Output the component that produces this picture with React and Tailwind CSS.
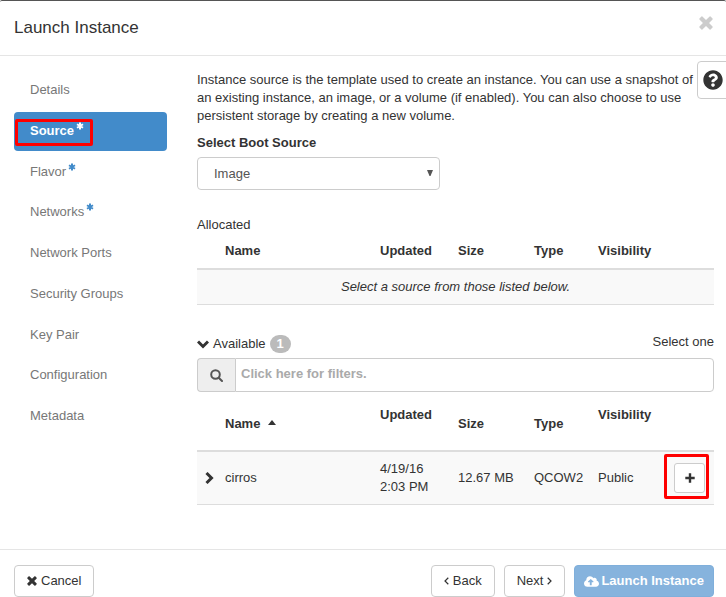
import { FaCloudUploadAlt, FaQuestionCircle } from "react-icons/fa";

const steps = [
  { label: "Details" },
  { label: "Source", required: true, active: true },
  { label: "Flavor", required: true },
  { label: "Networks", required: true },
  { label: "Network Ports" },
  { label: "Security Groups" },
  { label: "Key Pair" },
  { label: "Configuration" },
  { label: "Metadata" },
];

const CloseGlyph = ({ className }) => (
  <svg viewBox="0 0 12 12" className={className} fill="currentColor" aria-hidden="true">
    <path d="M2.9.4 6 3.4 9.1.4q.4-.4.8 0l1.7 1.7q.4.4 0 .8L8.600 6l3 3.100q.4.4 0 .8l-1.700 1.700q-.4.4-.8 0L6 8.600l-3.100 3q-.4.4-.8 0L.4 9.900q-.4-.4 0-.8L3.400 6 .4 2.900q-.4-.4 0-.8L2.100.4q.4-.4.8 0z" />
  </svg>
);

const ChevronGlyph = ({ className }) => (
  <svg viewBox="0 0 12 12" className={className} fill="none" stroke="currentColor" strokeWidth="3" aria-hidden="true">
    <path d="M1 3.500 6 8.500l5-5" />
  </svg>
);

const AngleGlyph = ({ className }) => (
  <svg viewBox="0 0 5 8" className={className} fill="none" stroke="currentColor" strokeWidth="1.200" aria-hidden="true">
    <path d="M4.300.8 1 4l3.300 3.200" />
  </svg>
);

const AsteriskGlyph = ({ className }) => (
  <svg viewBox="0 0 8 8" className={className} fill="none" stroke="currentColor" strokeWidth="2" aria-hidden="true">
    <path d="M4 .5v7M1 2.250l6 3.500M7 2.250 1 5.750" />
  </svg>
);

const SearchGlyph = ({ className }) => (
  <svg viewBox="0 0 13 13" className={className} fill="none" stroke="currentColor" strokeWidth="2" aria-hidden="true">
    <circle cx="5.500" cy="5.500" r="4.300" />
    <path d="m8.700 8.700 3.300 3.300" strokeLinecap="round" />
  </svg>
);

const Columns = () => (
  <colgroup>
    <col className="w-[20px]" />
    <col />
    <col className="w-[78px]" />
    <col className="w-[76px]" />
    <col className="w-[64px]" />
    <col className="w-[74px]" />
    <col className="w-[50px]" />
  </colgroup>
);

const outline =
  "flex h-8 items-center rounded border border-[#ccc] bg-white px-3 text-[#333]";

function StepNav() {
  return (
    <nav className="flex h-[365px] w-[153px] shrink-0 flex-col justify-between">
      {steps.map((s) => (
        <a
          key={s.label}
          href="#"
          aria-current={s.active ? "step" : undefined}
          className={
            s.active
              ? "relative flex h-[39px] items-center rounded bg-[#428bca] px-4 pb-px font-bold text-white"
              : "flex h-[39px] items-center px-4 pb-px text-[#777]"
          }
        >
          {s.label}
          {s.required && (
            <AsteriskGlyph
              className={s.active ? "mb-[10px] ml-[2px] size-2" : "mb-[10px] ml-[2px] size-2 text-[#428bca]"}
            />
          )}
          {s.active && (
            <span className="pointer-events-none absolute left-px top-[7px] h-[27px] w-[78px] rounded-xs border-3 border-[#fe0000]" />
          )}
        </a>
      ))}
    </nav>
  );
}

function Allocated() {
  return (
    <section className="mt-[26px]">
      <h2>Allocated</h2>
      <table className="w-full table-fixed text-left">
        <Columns />
        <thead>
          <tr className="border-b-2 border-[#ddd]">
            <th />
            <th className="p-2">Name</th>
            <th className="p-2">Updated</th>
            <th className="p-2">Size</th>
            <th className="p-2">Type</th>
            <th className="p-2">Visibility</th>
            <th />
          </tr>
        </thead>
        <tbody>
          <tr className="border-b border-[#ddd] bg-[#f9f9f9]">
            <td colSpan={7} className="p-2 text-center italic">
              Select a source from those listed below.
            </td>
          </tr>
        </tbody>
      </table>
    </section>
  );
}

function Available() {
  return (
    <section className="mt-7">
      <div className="flex items-center justify-between">
        <h2 className="flex items-center">
          <ChevronGlyph className="mr-1 size-3" />
          Available
          <span className="ml-1 flex h-[18px] items-center rounded-full bg-[#bbb] px-[7px] font-bold text-white">
            1
          </span>
        </h2>
        <span className="pb-1">Select one</span>
      </div>
      <div className="mt-[3px] flex h-[34px]">
        <span className="flex w-[38px] shrink-0 items-center justify-center rounded-l border border-r-0 border-[#ccc] bg-[#eee] text-[#555]">
          <SearchGlyph className="size-[13px]" />
        </span>
        <input
          type="text"
          aria-label="Filter available sources"
          placeholder="Click here for filters."
          className="min-w-0 flex-1 rounded-r border border-[#ccc] bg-white px-[5px] pb-[3px] font-bold placeholder:text-[#aaa]"
        />
      </div>
      <table className="mt-[6px] w-full table-fixed text-left">
        <Columns />
        <thead>
          <tr className="border-b-2 border-[#ddd]">
            <th />
            <th className="p-2">
              <span className="flex items-center gap-2">
                Name
                <svg viewBox="0 0 8 5" className="mb-1 h-[5px] w-2" fill="#333" aria-hidden="true">
                  <path d="M0 5 4 0l4 5z" />
                </svg>
              </span>
            </th>
            <th className="h-[53px] p-2 align-top">Updated</th>
            <th className="p-2">Size</th>
            <th className="p-2">Type</th>
            <th className="p-2 align-top">Visibility</th>
            <th />
          </tr>
        </thead>
        <tbody>
          <tr className="border-b border-[#ddd] bg-[#f9f9f9]">
            <td className="pl-[6px]">
              <button type="button" aria-label="Expand cirros" className="block">
                <ChevronGlyph className="size-3 -rotate-90" />
              </button>
            </td>
            <td className="p-2">cirros</td>
            <td className="p-2">
              4/19/16
              <br />
              2:03 PM
            </td>
            <td className="whitespace-nowrap p-2">12.67 MB</td>
            <td className="p-2">QCOW2</td>
            <td className="p-2">Public</td>
            <td>
              <div className="relative ml-auto mr-[9px] w-[31px]">
                <button
                  type="button"
                  aria-label="Allocate cirros"
                  className="flex h-[30px] w-full items-center justify-center rounded-[3px] border border-[#ccc] bg-white"
                >
                  <svg viewBox="0 0 10 10" className="size-[10px]" fill="#333" aria-hidden="true">
                    <path d="M3.800.3h2.400v3.500h3.500v2.400H6.200v3.500H3.800V6.200H.3V3.800h3.500z" />
                  </svg>
                </button>
                <span className="pointer-events-none absolute -left-[10px] -top-[9px] h-[45px] w-[45px] rounded-xs border-3 border-[#fe0000]" />
              </div>
            </td>
          </tr>
        </tbody>
      </table>
    </section>
  );
}

export default function App() {
  return (
    <div
      role="dialog"
      aria-labelledby="title"
      className="relative overflow-hidden rounded-t-xs border-t border-[#555] bg-white font-['Liberation_Sans',Arial,sans-serif] text-[13px] leading-[18px] text-[#333]"
    >
      <header className="flex h-[55px] items-center justify-between border-b border-[#e5e5e5] pl-[14px] pr-[13px]">
        <h1 id="title" className="text-[17px]">Launch Instance</h1>
        <button type="button" aria-label="Close" className="mb-[10px] text-[#ccc]">
          <CloseGlyph className="size-[14px]" />
        </button>
      </header>

      <button
        type="button"
        aria-label="Help"
        className="absolute -right-1 top-[60px] flex h-[38px] w-[33px] items-center rounded border border-[#ccc] bg-white pl-[5px]"
      >
        <FaQuestionCircle className="size-5 shrink-0" />
      </button>

      <div className="flex gap-[30px] pb-11 pl-[14px] pr-3 pt-[15px]">
        <StepNav />
        <main className="min-w-0 flex-1">
          <p className="pr-3">
            Instance source is the template used to create an instance. You can use a snapshot of
            an existing instance, an image, or a volume (if enabled). You can also choose to use
            persistent storage by creating a new volume.
          </p>
          <label htmlFor="boot" className="mt-[9px] block font-bold">
            Select Boot Source
          </label>
          <div className="relative mt-[5px] w-[243px]">
            <select
              id="boot"
              className="block h-[33px] w-full appearance-none rounded border border-[#ccc] bg-white px-4 text-[#555]"
            >
              <option>Image</option>
            </select>
            <svg
              viewBox="0 0 6 6"
              className="pointer-events-none absolute right-[7px] top-[13px] size-[6px]"
              fill="#555"
              aria-hidden="true"
            >
              <path d="M0 0h6L3.500 6h-1z" />
            </svg>
          </div>
          <Allocated />
          <Available />
        </main>
      </div>

      <footer className="flex items-center border-t border-[#e5e5e5] pl-[14px] pr-3 pt-[15px]">
        <button type="button" className={outline}>
          <CloseGlyph className="mr-1 size-[10px]" />
          Cancel
        </button>
        <div className="ml-auto flex gap-[9px]">
          <button type="button" className={outline}>
            <AngleGlyph className="mr-1 h-2 w-[5px]" />
            Back
          </button>
          <button type="button" className={outline}>
            Next
            <AngleGlyph className="ml-1 h-2 w-[5px] rotate-180" />
          </button>
          <button
            type="button"
            disabled
            className="flex h-8 items-center rounded border border-[#7fafdb] bg-[#86b3dd] px-[9px] font-bold text-white"
          >
            <FaCloudUploadAlt className="mr-[2px] size-[15px]" />
            Launch Instance
          </button>
        </div>
      </footer>
    </div>
  );
}
